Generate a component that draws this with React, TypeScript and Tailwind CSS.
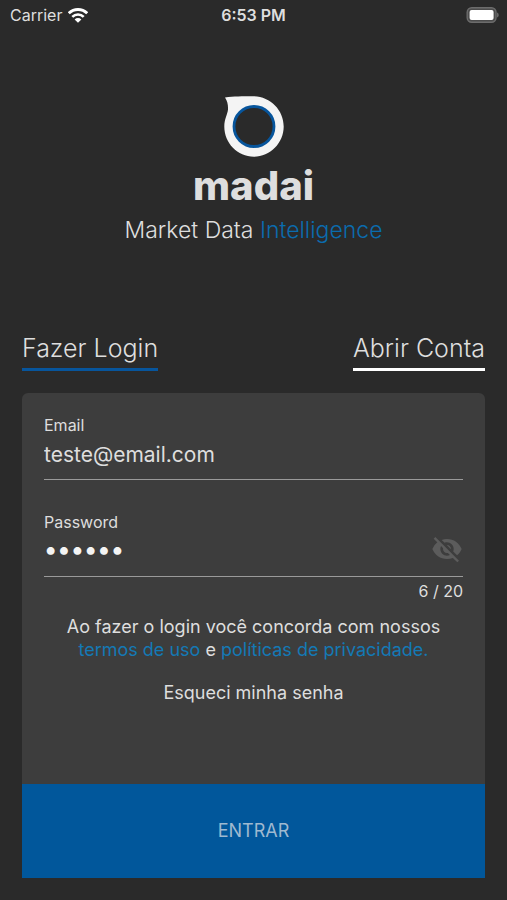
import React, { useState } from 'react';
import { MdVisibility, MdVisibilityOff } from 'react-icons/md';

const MAX_PASSWORD = 20;

const StatusBar: React.FC = () => (
  <header className="grid grid-cols-3 items-center h-[30px] px-2 text-base text-[#dedede]">
    <div className="flex items-center gap-1.5 pl-0.5">
      <span>Carrier</span>
      <svg className="w-5 h-[15px]" viewBox="0 0 20 15" aria-hidden="true">
        <path d="M.8 5.300a13 13 0 0 1 18.400 0" fill="none" stroke="#ffffff" strokeWidth="2.800" />
        <path d="M4.300 8.900a8 8 0 0 1 11.400 0" fill="none" stroke="#ffffff" strokeWidth="2.600" />
        <path d="M10 14.800 6.600 11.400a4.900 4.900 0 0 1 6.800 0z" fill="#ffffff" />
      </svg>
    </div>
    <span className="text-center font-semibold">6:53 PM</span>
    <svg className="justify-self-end w-[33px] h-4" viewBox="0 0 33 16" aria-hidden="true">
      <rect x="1.200" y="0.700" width="28.800" height="14.600" rx="4.500" fill="#4c4c4c" stroke="#6c6c6c" strokeWidth="1.400" />
      <rect x="3.600" y="3" width="24" height="10" rx="2" fill="#ffffff" />
      <path d="M31.200 5.500c1 .6 1.400 1.400 1.400 2.500s-.4 1.900-1.400 2.500z" fill="#777777" />
    </svg>
  </header>
);

const Brand: React.FC = () => (
  <div className="flex flex-col items-center pt-[66px] text-[#dedede]">
    <svg className="w-[60px] h-[61px]" viewBox="0 0 60 61" aria-hidden="true">
      <path
        d="M1 1.500C10 .3 18 .3 29 .3C46 .3 59.700 14 59.700 30.500C59.700 47 46 60.700 30 60.700C13.500 60.700 .3 47 .3 30.500C.3 23 3.600 18 4 13.500C4.200 9 3.400 5 1 1.500Z"
        fill="#f4f4f4"
      />
      <circle cx="30" cy="30.500" r="20" fill="#2a2a2a" stroke="#07559c" strokeWidth="2.800" />
    </svg>
    <h1 className="mt-2 text-[40px] leading-[42px] font-extrabold">madai</h1>
    <p className="mt-[7px] text-[23px] leading-8 font-light">
      Market Data <span className="text-[#0b6cae]">Intelligence</span>
    </p>
  </div>
);

const App: React.FC = () => {
  const [email, setEmail] = useState('teste@email.com');
  const [password, setPassword] = useState('123456');
  const [visible, setVisible] = useState(false);

  return (
    <div className="flex flex-col min-h-screen bg-[#2a2a2a] font-[Inter,sans-serif]">
      <StatusBar />
      <Brand />

      <main className="flex flex-col flex-grow px-[22px] pb-[22px] mt-[86px]">
        <nav className="flex items-center justify-between text-[25px] leading-8 font-light text-[#dedede]">
          <a href="#login" className="pb-1 border-b-3 border-[#07559c]">Fazer Login</a>
          <a href="#conta" className="pb-1 border-b-3 border-white">Abrir Conta</a>
        </nav>

        <form className="flex flex-col flex-grow mt-[22px] rounded-t-md overflow-hidden bg-[#3d3d3d] text-[#dedede]" onSubmit={(e) => e.preventDefault()}>
          <div className="flex flex-col flex-grow px-[22px] pt-5">
            <label htmlFor="email" className="text-base">Email</label>
            <input
              id="email"
              type="email"
              value={email}
              onChange={(e) => setEmail(e.target.value)}
              className="w-full h-[43px] pb-2 border-b border-[#9a9a9a] text-[21px] outline-none"
            />

            <label htmlFor="password" className="mt-[30px] text-base">Password</label>
            <div className="flex items-center h-[43px] border-b border-[#9a9a9a]">
              <input
                id="password"
                type={visible ? 'text' : 'password'}
                value={password}
                maxLength={MAX_PASSWORD}
                onChange={(e) => setPassword(e.target.value)}
                className="flex-grow min-w-0 h-full pb-3 text-[25px] font-medium text-[#f4f4f4] outline-none"
              />
              <button type="button" aria-label="Mostrar senha" onClick={() => setVisible(!visible)} className="pb-3 text-[32px] text-[#5c5c5c]">
                {visible ? <MdVisibility /> : <MdVisibilityOff />}
              </button>
            </div>
            <span className="self-end mt-1 text-base leading-5">{password.length} / {MAX_PASSWORD}</span>

            <p className="mt-3.5 text-lg leading-[23px] text-center">
              Ao fazer o login você concorda com nossos{' '}
              <br />
              <a href="#termos" className="text-[#1479b5]">termos de uso</a> e{' '}
              <a href="#privacidade" className="text-[#1479b5]">políticas de privacidade.</a>
            </p>
            <a href="#senha" className="self-center mt-5 text-lg leading-[23px]">Esqueci minha senha</a>
          </div>

          <button type="submit" className="h-[94px] bg-[#01579b] text-lg text-[#9fb9d0]">ENTRAR</button>
        </form>
      </main>
    </div>
  );
};

export default App;
